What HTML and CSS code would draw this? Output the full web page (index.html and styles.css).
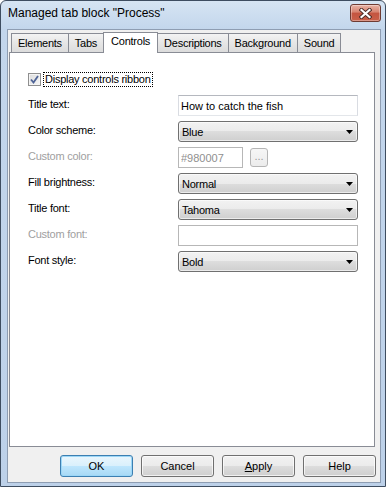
FILE: index.html
```html
<!DOCTYPE html>
<html>
<head>
<meta charset="utf-8">
<link rel="stylesheet" href="styles.css">
</head>
<body>
<div class="window">
  <div class="titlebar">
    <span class="title">Managed tab block "Process"</span>
    <div class="close">
      <svg width="13" height="11" viewBox="0 0 13 11"><path d="M2.5 2 L10.5 9 M10.5 2 L2.5 9" stroke="#4a2a26" stroke-width="4" stroke-linecap="square"/><path d="M2.5 2 L10.5 9 M10.5 2 L2.5 9" stroke="#fff" stroke-width="2.2" stroke-linecap="square"/></svg>
    </div>
  </div>
  <div class="client">
    <div class="tabs">
      <div class="tab">Elements</div>
      <div class="tab">Tabs</div>
      <div class="tab sel">Controls</div>
      <div class="tab">Descriptions</div>
      <div class="tab">Background</div>
      <div class="tab">Sound</div>
    </div>
    <div class="panel">
      <div class="check-row">
        <span class="checkbox"><svg width="11" height="11" viewBox="0 0 11 11"><path d="M2 5.5 L4.5 8.5 L9 2" fill="none" stroke="#4e6396" stroke-width="1.8"/></svg></span>
        <span class="focus">Display controls ribbon</span>
      </div>
      <div class="form">
        <label>Title text:</label>
        <input class="edit" type="text" value="How to catch the fish">
        <label>Color scheme:</label>
        <div class="combo"><span>Blue</span><svg class="arrow" width="7" height="4" viewBox="0 0 7 4"><path d="M0 0 H7 L3.5 4 Z" fill="#000"/></svg></div>
        <label class="dis">Custom color:</label>
        <div class="color-row">
          <input class="edit short" type="text" value="#980007" disabled>
          <button class="dots" disabled>...</button>
        </div>
        <label>Fill brightness:</label>
        <div class="combo"><span>Normal</span><svg class="arrow" width="7" height="4" viewBox="0 0 7 4"><path d="M0 0 H7 L3.5 4 Z" fill="#000"/></svg></div>
        <label>Title font:</label>
        <div class="combo"><span>Tahoma</span><svg class="arrow" width="7" height="4" viewBox="0 0 7 4"><path d="M0 0 H7 L3.5 4 Z" fill="#000"/></svg></div>
        <label class="dis">Custom font:</label>
        <input class="edit" type="text" value="" disabled>
        <label>Font style:</label>
        <div class="combo"><span>Bold</span><svg class="arrow" width="7" height="4" viewBox="0 0 7 4"><path d="M0 0 H7 L3.5 4 Z" fill="#000"/></svg></div>
      </div>
    </div>
    <div class="buttons">
      <button class="btn default">OK</button>
      <button class="btn">Cancel</button>
      <button class="btn"><u>A</u>pply</button>
      <button class="btn">Help</button>
    </div>
  </div>
</div>
</body>
</html>
```

FILE: styles.css
```css
* { box-sizing: border-box; }
body { margin: 0; background: #fff; font-family: "Liberation Sans", Arial, sans-serif; font-size: 11px; letter-spacing: -0.25px; color: #000; }

.window { width: 386px; height: 487px; border: 1px solid #3e4d60; border-radius: 6px 6px 0 0; background: linear-gradient(#d6e4f3, #c3d6ec 28px, #bdd1e9); padding: 0 4px 3px 6px; display: flex; flex-direction: column; }
.titlebar { height: 28px; flex: none; display: flex; justify-content: space-between; align-items: flex-start; padding: 3px 0 0 1px; }
.title { font-size: 12px; line-height: 18px; letter-spacing: 0; }
.close { width: 31px; height: 18px; border: 1px solid #6e3b33; border-radius: 3px; background: linear-gradient(#e8b3a6, #d7826f 45%, #c45440 50%, #c9604a); display: flex; align-items: center; justify-content: center; box-shadow: inset 0 0 0 1px rgba(255,255,255,0.35); }

.client { flex: 1; border: 1px solid #8e9db2; background: #f0f0f0; padding: 2px 5px 5px 1px; display: flex; flex-direction: column; }

.tabs { height: 20px; flex: none; display: flex; align-items: flex-end; margin-left: 2px; }
.tab { height: 19px; padding: 0 6px; border: 1px solid #898c95; border-bottom: none; margin-right: -1px; background: linear-gradient(#f3f3f3, #e6e6e6 50%, #dcdcdc); line-height: 18px; }
.tab.sel { height: 21px; margin-bottom: -1px; background: #fff; position: relative; z-index: 1; line-height: 17px; padding: 0 7px; }

.panel { flex: 1; border: 1px solid #898c95; background: #fff; padding: 19px 0 0 18px; }

.check-row { height: 15px; display: flex; align-items: center; }
.checkbox { width: 13px; height: 13px; border: 1px solid #8f8f8f; background: linear-gradient(135deg, #dcdcdc, #f6f6f6); margin-right: 2px; display: flex; align-items: center; justify-content: center; box-shadow: inset 0 0 0 1px #f4f4f4; }
.focus { height: 15px; border: 1px dotted #000; padding: 0 1px; line-height: 13px; }

.form { margin-top: 8px; display: grid; grid-template-columns: 150px 180px; grid-auto-rows: 21px; row-gap: 5px; }
.form label { align-self: center; padding-bottom: 3px; }
.form label.dis { color: #a0a0a0; }

.edit { width: 180px; height: 21px; font: inherit; color: #000; border: 1px solid; border-color: #b5b8bf #d9dce2 #e3e6ea #d9dce2; padding: 0 2px; background: #fff; outline: none; }
.edit:disabled { color: #8f8f8f; border-color: #b7b7b7; background: #fff; -webkit-text-fill-color: #8f8f8f; }
.edit.short { width: 65px; }

.color-row { display: flex; align-items: center; }
.dots { width: 18px; height: 19px; margin-left: 7px; padding: 0 0 4px; font: inherit; color: #9a9a9a; border: 1px solid #b5b5b5; border-radius: 3px; background: linear-gradient(#f6f6f6, #ececec); }

.combo { width: 180px; height: 21px; border: 1px solid #707070; border-radius: 3px; background: linear-gradient(#f2f2f2, #ebebeb 50%, #dddddd 50%, #cfcfcf); display: flex; align-items: center; justify-content: space-between; padding: 0 4px 0 3px; box-shadow: inset 0 0 0 1px rgba(255,255,255,0.6); }

.buttons { flex: none; display: flex; justify-content: flex-end; gap: 8px; margin: 8px -1px 0 0; }
.btn { width: 73px; height: 22px; font: inherit; color: #000; border: 1px solid #707070; border-radius: 3px; background: linear-gradient(#f2f2f2, #ebebeb 50%, #dddddd 50%, #cfcfcf); box-shadow: inset 0 0 0 1px rgba(255,255,255,0.7); padding: 0; }
.btn.default { border-color: #3c7fb1; background: linear-gradient(#eaf6fd, #d9f0fc 50%, #bee6fd 50%, #a7d9f5); box-shadow: inset 0 0 0 1px #9cd7f7; }
```
